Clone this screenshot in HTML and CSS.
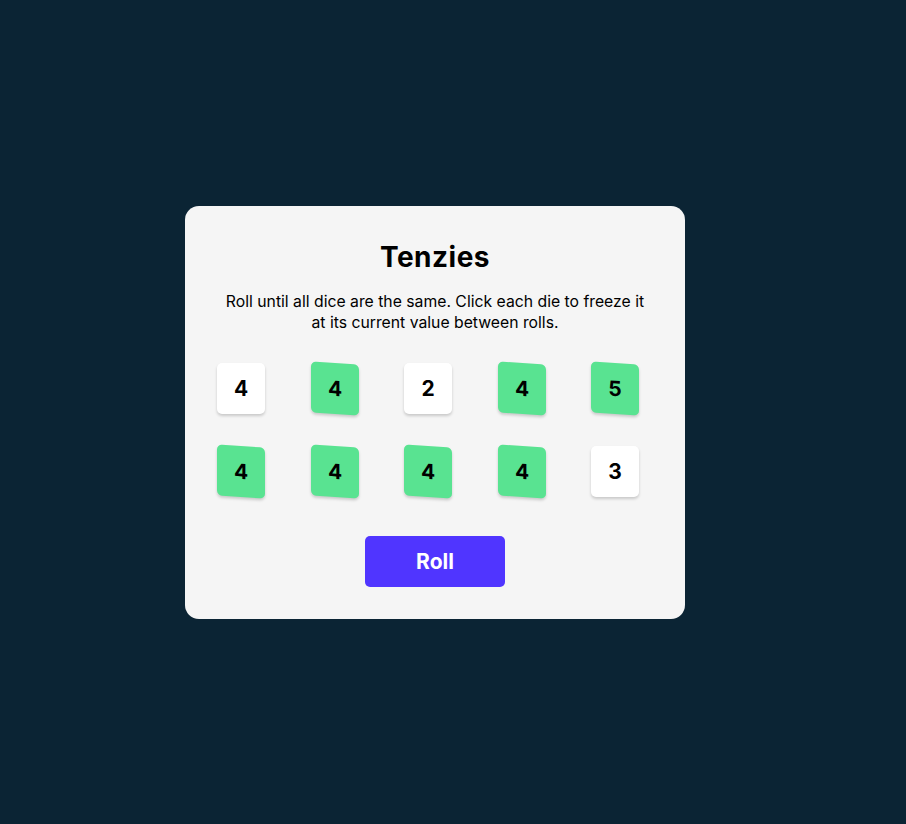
FILE: index.html
```html
<!DOCTYPE html>
<html lang="en">
<head>
<meta charset="utf-8">
<title>Tenzies</title>
<link rel="stylesheet" href="styles.css">
</head>
<body>
<main class="page">
  <section class="card">
    <h1 class="title">Tenzies</h1>
    <p class="instructions">Roll until all dice are the same. Click each die to freeze it at its current value between rolls.</p>
    <div class="dice-grid">
      <button class="die">4</button>
      <button class="die held">4</button>
      <button class="die">2</button>
      <button class="die held">4</button>
      <button class="die held">5</button>
      <button class="die held">4</button>
      <button class="die held">4</button>
      <button class="die held">4</button>
      <button class="die held">4</button>
      <button class="die">3</button>
    </div>
    <button class="roll">Roll</button>
  </section>
</main>
</body>
</html>
```
FILE: styles.css
```css
html, body {
  margin: 0;
  padding: 0;
}
body {
  background: #0b2434;
  font-family: Inter, "Noto Sans", sans-serif;
}
.page {
  height: 824px;
  display: flex;
  align-items: flex-start;
  justify-content: flex-start;
  padding: 206px 0 0 185px;
  box-sizing: border-box;
}
.card {
  width: 500px;
  height: 413px;
  flex-shrink: 0;
  box-sizing: border-box;
  background: #f5f5f5;
  border-radius: 14px;
  padding: 34px 32px 32px;
  display: flex;
  flex-direction: column;
  align-items: center;
}
.title {
  margin: 0;
  font-size: 28px;
  font-weight: 700;
  line-height: 34px;
  color: #000;
  letter-spacing: 0.5px;
}
.instructions {
  margin: 17px 0 0;
  font-size: 15.75px;
  line-height: 21px;
  text-align: center;
  color: #000;
  font-weight: 400;
  padding: 0 4px;
}
.dice-grid {
  align-self: stretch;
  margin-top: 30px;
  display: grid;
  grid-template-columns: repeat(5, 48px);
  column-gap: 45.5px;
  row-gap: 32px;
}
.die {
  width: 48px;
  height: 51px;
  border: none;
  border-radius: 5px;
  background: #fff;
  box-shadow: 0 2px 3px rgba(0, 0, 0, 0.18);
  font-family: Inter, sans-serif;
  font-weight: 700;
  font-size: 21px;
  color: #000;
  padding: 0;
  display: flex;
  align-items: center;
  justify-content: center;
}
.die.held {
  background: #59e391;
  transform: skewY(4deg);
}
.roll {
  margin-top: 39px;
  flex-shrink: 0;
  width: 140px;
  height: 51px;
  border: none;
  border-radius: 5px;
  background: #5035ff;
  color: #fff;
  font-family: Inter, sans-serif;
  font-weight: 700;
  font-size: 21px;
}
```
